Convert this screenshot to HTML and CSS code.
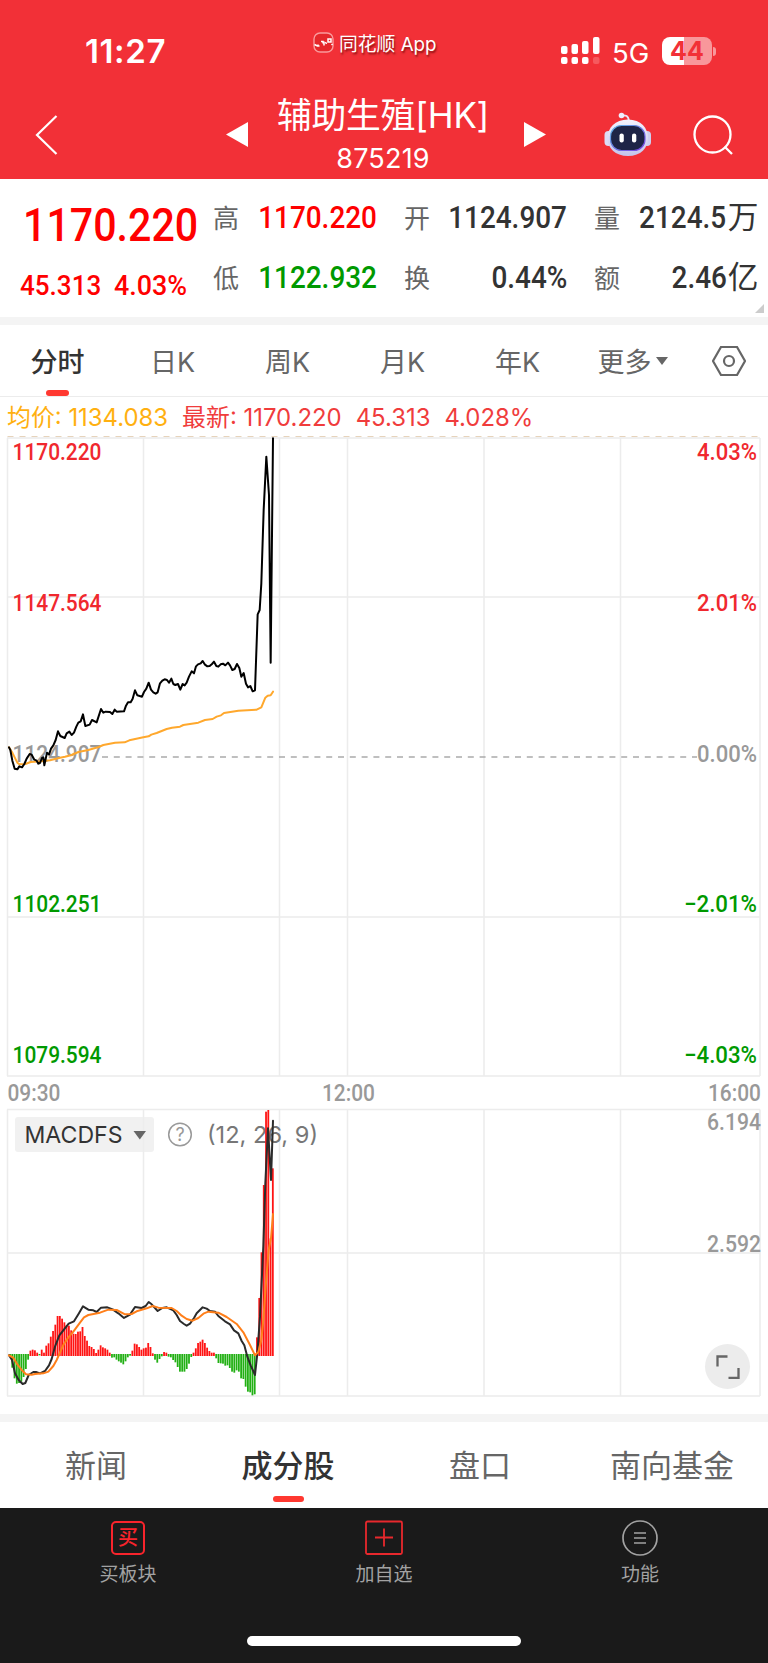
FILE: index.html
```
<!DOCTYPE html>
<html lang="zh-CN">
    <head>
        <meta charset="utf-8">
        <title>辅助生殖[HK] 875219</title>
        <link rel="stylesheet" href="styles.css">
    </head>
    <body>

        <header class="header">
            <div class="status">
                <div class="clock">11:27</div>
                <div class="brand">
                    <svg width="21" height="21" viewBox="0 0 21 21">
                        <rect x="1" y="1" width="19" height="19" rx="6" fill="#e5272b" stroke="#f99a9c" stroke-width="1.4"/>
                        <path d="M1.500 12.500l3 1.500M5 12.500v1.500h1.500M8 9.500h2v2M11 9.500v4M12.500 10l1 2M15 7h3v3h-3zM18.500 12l1 1" fill="none" stroke="#fff" stroke-width="1.500"/>
                    </svg>
                    <span>同花顺 App</span>
                </div>
                <div class="signal">
                    <svg width="39" height="28" viewBox="0 0 39 28" fill="#fff">
                        <rect x="0" y="9" width="6.500" height="8" rx="2"/>
                        <rect x="10.500" y="7" width="6.500" height="10" rx="2"/>
                        <rect x="21" y="4" width="6.500" height="13" rx="2"/>
                        <rect x="32" y="0" width="6.500" height="17" rx="2"/>
                        <rect x="0" y="20" width="6.500" height="7" rx="2"/>
                        <rect x="10.500" y="20" width="6.500" height="7" rx="2"/>
                        <rect x="21" y="20" width="6.500" height="7" rx="2"/>
                        <rect x="32" y="20" width="6.500" height="7" rx="2" fill="#f6595e"/>
                    </svg>
                    <span class="net">5G</span>
                    <div class="battery"><span>44</span></div>
                    <i class="battery-tip"></i>
                </div>
            </div>
            <div class="nav">
                <svg class="back" width="24" height="42" viewBox="0 0 24 42"><path d="M21.500 2L2 21l19.500 19" fill="none" stroke="#fff" stroke-width="2.200"/></svg>
                <svg class="prev" width="22" height="26" viewBox="0 0 22 26"><path d="M22 0v25L0 12.500z" fill="#fff"/></svg>
                <div class="title">
                    <h1>辅助生殖[HK]</h1>
                    <p>875219</p>
                </div>
                <svg class="next" width="22" height="26" viewBox="0 0 22 26"><path d="M0 0v25l22-12.500z" fill="#fff"/></svg>
                <svg class="robot" width="48" height="46" viewBox="0 0 48 46">
                    <defs>
                        <linearGradient id="shell" x1="0" y1="0" x2="0" y2="1">
                            <stop offset="0" stop-color="#f4f2fd"/>
                            <stop offset="1" stop-color="#c4c4ec"/>
                        </linearGradient>
                        <linearGradient id="rim" x1="0" y1="0" x2="1" y2="1">
                            <stop offset="0" stop-color="#5fb8e8"/>
                            <stop offset="1" stop-color="#7a3fe0"/>
                        </linearGradient>
                    </defs>
                    <path d="M17 3.500c5-.5 7.500 0 8 6" fill="none" stroke="#e9e6f8" stroke-width="1.800"/>
                    <circle cx="17.500" cy="3.500" r="2.800" fill="#efeefd"/>
                    <rect x="0.500" y="19" width="8" height="15" rx="4" fill="#dcdcf6"/>
                    <rect x="39" y="19" width="8" height="15" rx="4" fill="#cfcff0"/>
                    <path d="M24 7.500c13 0 20 8.500 20 18.500s-7 18-20 18S3.500 36 3.500 26 11 7.500 24 7.500z" fill="url(#shell)"/>
                    <rect x="6.500" y="13.500" width="34.500" height="25" rx="11" fill="#1e2446" stroke="url(#rim)" stroke-width="1.200"/>
                    <rect x="15.500" y="21.500" width="4.300" height="9" rx="2.100" fill="#fff"/>
                    <rect x="28" y="21.500" width="4.300" height="9" rx="2.100" fill="#fff"/>
                </svg>
                <svg class="search" width="42" height="42" viewBox="0 0 42 42" fill="none" stroke="#fff" stroke-width="2.300"><circle cx="20.500" cy="20.500" r="18"/><path d="M32.500 32.500l7.500 7.500"/></svg>
            </div>
        </header>

        <section class="quote">
            <div class="main-price">
                <div class="price"><span class="num">1170.220</span></div>
                <div class="change"><span class="num">45.313</span><span class="num">4.03%</span></div>
            </div>
            <div class="pair"><label>高</label><span class="num up">1170.220</span></div>
            <div class="pair"><label>开</label><span class="num">1124.907</span></div>
            <div class="pair"><label>量</label><span class="num">2124.5<b>万</b></span></div>
            <div class="pair"><label>低</label><span class="num down">1122.932</span></div>
            <div class="pair"><label>换</label><span class="num">0.44%</span></div>
            <div class="pair"><label>额</label><span class="num">2.46<b>亿</b></span></div>
            <i class="corner"></i>
        </section>

        <nav class="periods">
            <a class="active">分时</a>
            <a>日K</a>
            <a>周K</a>
            <a>月K</a>
            <a>年K</a>
            <a>更多<i class="caret"></i></a>
            <a>
                <svg width="34" height="30" viewBox="0 0 34 30" fill="none" stroke="#666" stroke-width="2.200"><path d="M9 1h16l8 14-8 14H9L1 15z"/><circle cx="17" cy="15" r="5"/></svg>
            </a>
        </nav>

        <div class="legend">
            <span class="avg">均价: 1134.083</span>
            <span>最新: 1170.220</span>
            <span>45.313</span>
            <span>4.028%</span>
        </div>

        <!-- intraday price -->
        <svg class="chart" width="768" height="672" viewBox="0 436 768 672">
            <path class="grid" d="M7.500 438V1076M143.500 438V1076M279.500 438V1076M347.500 438V1076M484 438V1076M620.500 438V1076M760 438V1076M7 438H760M7 597H760M7 917H760M7 1076H760"/>
            <path d="M7.500 436.500H760" stroke="#e6d3bb" stroke-dasharray="6 6"/>
            <g class="axis">
                <text class="up" x="12.500" y="460" textLength="89" lengthAdjust="spacingAndGlyphs">1170.220</text>
                <text class="up" x="12.500" y="610.500" textLength="89" lengthAdjust="spacingAndGlyphs">1147.564</text>
                <text class="mid" x="12.500" y="761.500" textLength="89" lengthAdjust="spacingAndGlyphs">1124.907</text>
                <text class="down" x="12.500" y="912" textLength="89" lengthAdjust="spacingAndGlyphs">1102.251</text>
                <text class="down" x="12.500" y="1063" textLength="89" lengthAdjust="spacingAndGlyphs">1079.594</text>
                <text class="up" x="697" y="460" textLength="60" lengthAdjust="spacingAndGlyphs">4.03%</text>
                <text class="up" x="697" y="610.500" textLength="60" lengthAdjust="spacingAndGlyphs">2.01%</text>
                <text class="mid" x="697" y="761.500" textLength="60" lengthAdjust="spacingAndGlyphs">0.00%</text>
                <text class="down" x="684" y="912" textLength="73" lengthAdjust="spacingAndGlyphs">−2.01%</text>
                <text class="down" x="684" y="1063" textLength="73" lengthAdjust="spacingAndGlyphs">−4.03%</text>
                <text class="time" x="7.500" y="1100.500" textLength="53" lengthAdjust="spacingAndGlyphs">09:30</text>
                <text class="time" x="322" y="1100.500" textLength="53" lengthAdjust="spacingAndGlyphs">12:00</text>
                <text class="time" x="708" y="1100.500" textLength="53" lengthAdjust="spacingAndGlyphs">16:00</text>
            </g>
            <path d="M102 757H697" stroke="#aaa" stroke-width="1.600" stroke-dasharray="6 5.800"/>
            <g transform="translate(0 640) scale(.33333)" class="lines">
                <polyline stroke="#ffa82d" points="27,322 38,340 52,368 58,373 76,372 92,366 125,364 150,361 180,353 195,350 215,345 235,336 265,330 296,321 310,315 345,308 374,307 388,301 430,292 446,289 454,284 470,279 500,267 516,263 540,260 550,255 595,248 615,240 638,237 650,230 663,226 672,219 715,212 770,209 784,202 796,173 803,167 812,166 819,155"/>
                <polyline stroke="#000" points="27,322 31,330 37,362 44,386 52,388 58,379 66,382 73,372 80,356 89,342 95,344 103,359 110,362 115,371 120,369 126,354 130,352 133,376 141,338 147,344 153,326 160,316 167,300 174,274 181,288 194,294 200,280 208,275 215,285 222,278 229,260 235,248 242,244 249,223 256,258 269,254 276,240 290,247 303,207 310,218 317,215 330,216 337,222 344,209 350,215 372,214 378,197 384,187 392,187 398,176 405,151 412,166 426,170 432,156 439,146 446,128 453,149 460,157 467,161 473,157 480,130 487,122 494,118 501,120 507,128 514,116 520,132 526,135 534,132 541,149 548,132 554,136 560,128 567,110 575,94 582,100 588,79 594,73 602,70 608,63 615,74 622,79 629,78 636,72 642,65 649,78 655,80 662,73 669,71 676,76 684,68 690,76 697,90 704,87 711,72 718,84 724,110 731,99 738,131 744,142 751,138 758,154 765,151 773,-77 779,-90 784,-170 791,-390 799,-550 807,-435 812,68 819,-605"/>
            </g>
        </svg>

        <!-- MACD -->
        <div class="macd">
            <svg class="chart" width="768" height="306" viewBox="0 1108 768 306">
                <path class="grid" d="M7.500 1109.500V1396M143.500 1109.500V1396M279.500 1109.500V1396M347.500 1109.500V1396M484 1109.500V1396M620.500 1109.500V1396M760 1109.500V1396M7 1109.500H760M7 1253H760M7 1396H760"/>
                <rect x="15" y="1117" width="139" height="35" rx="3" fill="#ededed" fill-opacity=".8"/>
                <text class="label dark" x="24.500" y="1143" textLength="98" lengthAdjust="spacingAndGlyphs">MACDFS</text>
                <path d="M133.500 1131h12.500l-6.200 8.500z" fill="#666"/>
                <circle cx="180" cy="1134.500" r="11.300" fill="none" stroke="#999" stroke-width="1.500"/>
                <text class="help" x="180" y="1141" text-anchor="middle">?</text>
                <text class="label" x="207" y="1142.500" textLength="111" lengthAdjust="spacingAndGlyphs">(12, 26, 9)</text>
                <g class="axis">
                    <text class="time" x="707" y="1129.500" textLength="54" lengthAdjust="spacingAndGlyphs">6.194</text>
                    <text class="time" x="707" y="1251.500" textLength="54" lengthAdjust="spacingAndGlyphs">2.592</text>
                </g>
                <g transform="translate(0 1060) scale(.33333)">
                    <g id="bars"></g>
                    <g class="lines">
                        <polyline stroke="#2b2b2b" points="27,886 36,900 45,940 56,960 68,972 76,969 86,945 100,936 108,936 120,940 135,933 147,916 155,897 165,860 178,826 190,811 206,791 222,784 236,761 249,739 265,749 280,751 290,756 303,743 322,742 338,748 355,760 372,774 390,764 405,741 425,744 437,738 446,726 455,733 473,753 487,744 500,742 520,751 530,765 540,783 552,792 560,797 570,791 582,774 590,760 608,742 620,746 630,753 645,755 655,768 675,784 690,793 702,811 715,820 725,843 733,856 742,890 752,916 765,945 772,880 780,770 790,560 796,370 804,205 813,360 819,182"/>
                        <polyline stroke="#ff7f1a" points="27,886 40,893 50,910 65,930 78,943 95,944 105,942 130,940 145,935 160,918 170,900 190,855 205,832 220,815 240,788 252,772 265,765 300,758 325,749 350,750 375,763 395,762 410,754 440,745 458,738 475,743 515,744 530,753 545,767 560,777 578,782 595,774 612,760 625,755 655,758 680,771 710,792 730,817 750,855 765,886 775,876 784,840 790,780 797,680 806,570 813,535 819,462"/>
                    </g>
                </g>
            </svg>
            <div class="expand">
                <svg width="24" height="24" viewBox="0 0 24 24" fill="none" stroke="#666" stroke-width="2.300"><path d="M1.500 11.500V1.500h10M22.500 13v10h-10"/></svg>
            </div>
        </div>

        <nav class="tabs">
            <a>新闻</a>
            <a class="active">成分股</a>
            <a>盘口</a>
            <a>南向基金</a>
        </nav>

        <footer class="toolbar">
            <a>
                <span class="buy">买</span>
                买板块
            </a>
            <a>
                <svg width="38" height="36" viewBox="0 0 38 36" fill="none" stroke="#e8282d" stroke-width="1.800"><rect x="1" y="1.500" width="36" height="32.500" rx="1.500"/><path d="M10 17.500h18M19 8.500v18"/></svg>
                加自选
            </a>
            <a>
                <svg width="36" height="36" viewBox="0 0 36 36" fill="none" stroke="#a2a2a2" stroke-width="1.700"><circle cx="18" cy="18" r="17"/><path d="M12 13h12M12 18h12M12 23h12"/></svg>
                功能
            </a>
            <i class="home"></i>
        </footer>

        <script>
            // histogram values, positive is up
            const values = [
                -4, -38, -70, -86, -84, -80, -66, -42, -14, 13, 16, 14, 7, -1, 16, 7, 28, 35, 55, 72, 91,
                117, 117, 109, 98, 90, 88, 74, 64, 63, 70, 71, 84, 57, 43, 27, 24, 18, 6, 16, 29, 23, 20, 16, 7,
                -8, -7, -14, -19, -23, -28, -19, -7, -2, 13, 34, 32, 24, 16, 20, 22, 36, 24, 5,
                -14, -23, -12, -4, 9, 7, -5, -7, -15, -22, -36, -50, -50, -50, -42, -26, -6,
                7, 20, 36, 40, 46, 36, 22, 12, 7, 7,
                -10, -24, -25, -26, -32, -31, -39, -50, -53, -46, -50, -70, -72, -95, -110, -112, -121, -118,
                53, 171, 308, 510, 730, 735, 350, 560
            ];
            const step = (818.5 - 30) / (values.length - 1);
            const bars = document.getElementById('bars');

            values.forEach((v, i) => {
                const bar = document.createElementNS('http://www.w3.org/2000/svg', 'rect');
                bar.setAttribute('x', 30 + i * step - 2.7);
                bar.setAttribute('y', v > 0 ? 885 - v : 882);
                bar.setAttribute('width', 5.4);
                bar.setAttribute('height', Math.abs(v) + 3);
                bar.setAttribute('fill', v > 0 ? '#ff1414' : '#22b014');
                bars.appendChild(bar);
            });
        </script>
    </body>
</html>
```

FILE: styles.css
```
* {
    box-sizing: border-box;
}

body {
    margin: 0;
    width: 768px;
    background: #fff;
    color: #333;
    font-family: Inter, "Noto Sans CJK SC", sans-serif;
}

svg {
    display: block;
    flex: none;
}

.up { color: #ff0000; fill: #f0282e; }
.down { color: #009900; fill: #009900; }

/* header */
.header {
    height: 179px;
    background: #f23037;
    color: #fff;
}

.status {
    display: grid;
    grid-template-columns: 313px 248px 1fr;
    height: 88px;
}

.clock {
    padding: 32px 0 0 85px;
    font-size: 33px;
    line-height: 39px;
    font-weight: 600;
    letter-spacing: 0.6px;
}

.brand {
    display: flex;
    gap: 5px;
    padding-top: 32px;
}

.brand span {
    font-size: 18.8px;
    line-height: 25px;
    white-space: nowrap;
    text-shadow: 1px 2px 2px rgba(90, 0, 0, .7);
}

.signal {
    display: flex;
    padding-top: 37px;
}

.net {
    margin-left: 12px;
    width: 50px;
    font-size: 27.5px;
    line-height: 32px;
}

.battery {
    width: 50px;
    height: 28px;
    border-radius: 8px;
    background: linear-gradient(90deg, #fff 44%, #f8979b 44%);
    color: #f23037;
    font-size: 25px;
    line-height: 28px;
    font-weight: 700;
    text-align: center;
}

.battery-tip {
    margin: 10px 0 0 1px;
    width: 3px;
    height: 9px;
    border-radius: 0 4px 4px 0;
    background: #f8979b;
}

.nav {
    display: grid;
    grid-template-columns: 35px 191px 48px 218px 32px 80px 88px 1fr;
    height: 91px;
}

.back { grid-column: 2; margin-top: 26px; }
.prev { grid-column: 3; margin-top: 34px; }
.next { grid-column: 5; margin: 34px 0 0 32px; }
.robot { grid-column: 7; margin-top: 24px; }
.search { grid-column: 8; margin-top: 26px; }

.title {
    text-align: center;
    white-space: nowrap;
}

.title h1 {
    margin: 4px 0 0;
    font-size: 34.8px;
    line-height: 46px;
    font-weight: 400;
    letter-spacing: -0.2px;
}

.title p {
    margin: 6px 0 0;
    font-size: 27px;
    line-height: 30px;
    letter-spacing: 0.2px;
}

/* quote */
.quote {
    position: relative;
    display: grid;
    grid-template-columns: 186px 164px 163px 163px;
    grid-template-rows: 60px 60px;
    column-gap: 27px;
    height: 146px;
    padding: 10px 0 0 0;
    border-bottom: 8px solid #f4f4f4;
}

.main-price {
    grid-row: span 2;
    color: #ff0000;
}

.num {
    display: inline-block;
    font-family: Roboto, "Noto Sans CJK SC", sans-serif;
    font-weight: 500;
    white-space: nowrap;
    transform: scaleX(.9);
}

.price {
    padding: 7px 0 0 23px;
    font-size: 46.5px;
    line-height: 56px;
}

.price .num {
    transform: scaleX(.885);
    transform-origin: left;
}

.change {
    display: flex;
    padding: 15px 0 0 20px;
    font-size: 28px;
    line-height: 36px;
}

.change .num {
    width: 94px;
    flex: none;
    transform: scaleX(.93);
    transform-origin: left;
}

.change .num + .num {
    transform: scaleX(.96);
}

.pair {
    display: flex;
    justify-content: space-between;
    line-height: 60px;
}

.pair label {
    font-size: 26px;
    color: #666;
}

.pair .num {
    font-size: 31px;
    line-height: 58px;
    transform-origin: right;
}

.pair b {
    display: inline-block;
    margin-left: 3px;
    font-size: 31px;
    font-weight: 400;
    line-height: 30px;
    transform: scaleX(1.1);
}

.corner {
    position: absolute;
    right: 4px;
    bottom: 4px;
    border: solid transparent;
    border-width: 9px 0 0 9px;
    border-bottom: 9px solid #ccc;
    border-top: 0;
}

/* period tabs */
.periods {
    display: grid;
    grid-template-columns: repeat(6, 115px) 78px;
    height: 72px;
    border-bottom: 1px solid #ececec;
}

.periods a {
    position: relative;
    display: flex;
    align-items: center;
    justify-content: center;
    font-size: 27px;
    color: #666;
}

.periods .active,
.tabs .active {
    font-weight: 500;
    color: #333;
}

.periods .active::after,
.tabs .active::after {
    content: "";
    position: absolute;
    bottom: 0;
    width: 23px;
    height: 6px;
    border-radius: 3px;
    background: #ff3830;
}

.caret {
    margin-left: 4px;
    border: 6px solid transparent;
    border-top: 8px solid #666;
    border-bottom: 0;
}

.legend {
    display: flex;
    gap: 14px;
    height: 39px;
    padding-left: 7px;
    font-size: 23.9px;
    line-height: 41px;
    white-space: nowrap;
    color: #f03c3c;
}

.legend .avg { color: #ffb010; }

/* charts */
.grid {
    fill: none;
    stroke: #ececec;
    stroke-width: 1.5;
}

.lines polyline {
    fill: none;
    stroke-width: 6;
    stroke-linejoin: round;
    stroke-linecap: round;
}

.axis text {
    font-family: Roboto, sans-serif;
    font-size: 23px;
    font-weight: 500;
}

.axis .mid { fill: #999; }

.axis .time { fill: #999; }

.label {
    font-size: 23.5px;
    fill: #777;
}

.label.dark { fill: #333; }

.help {
    font-size: 18px;
    fill: #999;
}

.macd {
    position: relative;
    height: 314px;
    border-bottom: 8px solid #f4f4f4;
}

.expand {
    position: absolute;
    left: 705px;
    top: 236px;
    display: flex;
    align-items: center;
    justify-content: center;
    width: 45px;
    height: 45px;
    border-radius: 50%;
    background: #ececec;
}

/* bottom tabs */
.tabs {
    display: grid;
    grid-template-columns: repeat(4, 1fr);
    height: 86px;
}

.tabs a {
    position: relative;
    display: flex;
    align-items: center;
    justify-content: center;
    padding-bottom: 4px;
    font-size: 31px;
    color: #666;
}

.tabs .active::after {
    bottom: 6px;
    width: 31px;
}

.toolbar {
    position: relative;
    display: grid;
    grid-template-columns: repeat(3, 1fr);
    height: 155px;
    padding-top: 12px;
    background: #1a1a1a;
}

.toolbar a {
    display: flex;
    flex-direction: column;
    align-items: center;
    font-size: 19px;
    line-height: 38px;
    color: #a2a2a2;
}

.buy {
    width: 34px;
    height: 34px;
    margin: 1px 0;
    border: 2px solid #f8242c;
    border-radius: 5px;
    font-size: 20px;
    line-height: 30px;
    font-weight: 500;
    text-align: center;
    color: #f8242c;
}

.home {
    position: absolute;
    left: 247px;
    top: 128px;
    width: 274px;
    height: 10px;
    border-radius: 5px;
    background: #fff;
}
```
